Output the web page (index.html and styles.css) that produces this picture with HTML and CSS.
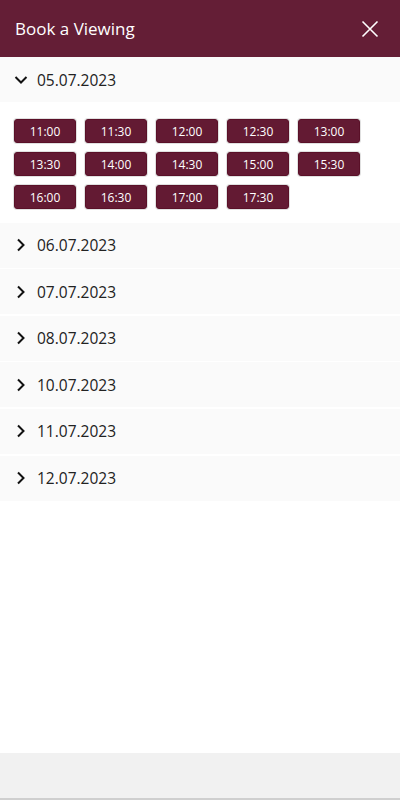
FILE: index.html
```html
<!DOCTYPE html>
<html lang="en">
<head>
  <meta charset="UTF-8" />
  <meta name="viewport" content="width=device-width, initial-scale=1" />
  <title>Book a Viewing</title>
  <link rel="stylesheet" href="styles.css">
</head>
<body>

<div class="sheet">
  <!-- Başlık -->
  <header class="topBar">
    <h1>Book a Viewing</h1>
    <button class="closeBtn" aria-label="Close">
      <svg width="18" height="18" viewBox="0 0 18 18">
        <path d="M1.5 1.5 L16.5 16.5 M16.5 1.5 L1.5 16.5" stroke="#fff" stroke-width="1.6" fill="none" />
      </svg>
    </button>
  </header>

  <!-- Tarihler -->
  <div class="dayList">
    <div class="day open">
      <div class="dayHead">
        <svg class="chev" width="14" height="14" viewBox="0 0 14 14">
          <path d="M1.5 4 L7 9.5 L12.5 4" stroke="#111" stroke-width="2" fill="none" />
        </svg>
        <span>05.07.2023</span>
      </div>
      <div class="slots">
        <button class="slot">11:00</button>
        <button class="slot">11:30</button>
        <button class="slot">12:00</button>
        <button class="slot">12:30</button>
        <button class="slot">13:00</button>
        <button class="slot">13:30</button>
        <button class="slot">14:00</button>
        <button class="slot">14:30</button>
        <button class="slot">15:00</button>
        <button class="slot">15:30</button>
        <button class="slot">16:00</button>
        <button class="slot">16:30</button>
        <button class="slot">17:00</button>
        <button class="slot">17:30</button>
      </div>
    </div>

    <div class="day">
      <div class="dayHead">
        <svg class="chev" width="14" height="14" viewBox="0 0 14 14"><path d="M4 1.5 L9.5 7 L4 12.5" stroke="#111" stroke-width="2" fill="none" /></svg>
        <span>06.07.2023</span>
      </div>
    </div>
    <div class="day">
      <div class="dayHead">
        <svg class="chev" width="14" height="14" viewBox="0 0 14 14"><path d="M4 1.5 L9.5 7 L4 12.5" stroke="#111" stroke-width="2" fill="none" /></svg>
        <span>07.07.2023</span>
      </div>
    </div>
    <div class="day">
      <div class="dayHead">
        <svg class="chev" width="14" height="14" viewBox="0 0 14 14"><path d="M4 1.5 L9.5 7 L4 12.5" stroke="#111" stroke-width="2" fill="none" /></svg>
        <span>08.07.2023</span>
      </div>
    </div>
    <div class="day">
      <div class="dayHead">
        <svg class="chev" width="14" height="14" viewBox="0 0 14 14"><path d="M4 1.5 L9.5 7 L4 12.5" stroke="#111" stroke-width="2" fill="none" /></svg>
        <span>10.07.2023</span>
      </div>
    </div>
    <div class="day">
      <div class="dayHead">
        <svg class="chev" width="14" height="14" viewBox="0 0 14 14"><path d="M4 1.5 L9.5 7 L4 12.5" stroke="#111" stroke-width="2" fill="none" /></svg>
        <span>11.07.2023</span>
      </div>
    </div>
    <div class="day">
      <div class="dayHead">
        <svg class="chev" width="14" height="14" viewBox="0 0 14 14"><path d="M4 1.5 L9.5 7 L4 12.5" stroke="#111" stroke-width="2" fill="none" /></svg>
        <span>12.07.2023</span>
      </div>
    </div>
  </div>

  <!-- Alt çubuk -->
  <footer class="bottomBar"></footer>
</div>

</body>
</html>
```

FILE: styles.css
```css
* { margin: 0; padding: 0; box-sizing: border-box; }
body {
  font-family: "Open Sans", "Liberation Sans", sans-serif;
  background: #fff;
  color: #222;
}

.sheet {
  width: 100vw;
  height: 100vh;
  display: flex;
  flex-direction: column;
}

/* Başlık */
.topBar {
  height: 57px;
  background: #641e36;
  color: #fff;
  display: flex;
  align-items: center;
  justify-content: space-between;
  padding: 0 21px 0 15px;
  flex-shrink: 0;
}

.topBar h1 {
  font-size: 17px;
  font-weight: 400;
}

.closeBtn {
  background: none;
  border: none;
  width: 18px;
  height: 18px;
  display: flex;
  cursor: pointer;
}

/* Tarihler */
.dayList {
  flex: 1;
  display: flex;
  flex-direction: column;
  gap: 1.6px;
}

.dayHead {
  height: 45px;
  background: #fafafa;
  display: flex;
  align-items: center;
  gap: 9px;
  padding-left: 14px;
  font-size: 15.5px;
  color: #222;
  cursor: pointer;
}

.chev { flex-shrink: 0; }

.slots {
  display: flex;
  flex-wrap: wrap;
  gap: 9px;
  padding: 17px 14px 12px;
}

.slot {
  width: 62px;
  height: 24px;
  background: #631a33;
  color: #fff;
  border: 1px solid #5a1028;
  border-radius: 3px;
  box-shadow: 0 0 0 1px rgba(0,0,0,0.12);
  font-family: inherit;
  font-size: 12px;
  cursor: pointer;
}

/* Alt çubuk */
.bottomBar {
  height: 47px;
  background: #f1f1f1;
  border-bottom: 2px solid #cfcfcf;
  flex-shrink: 0;
}
```
